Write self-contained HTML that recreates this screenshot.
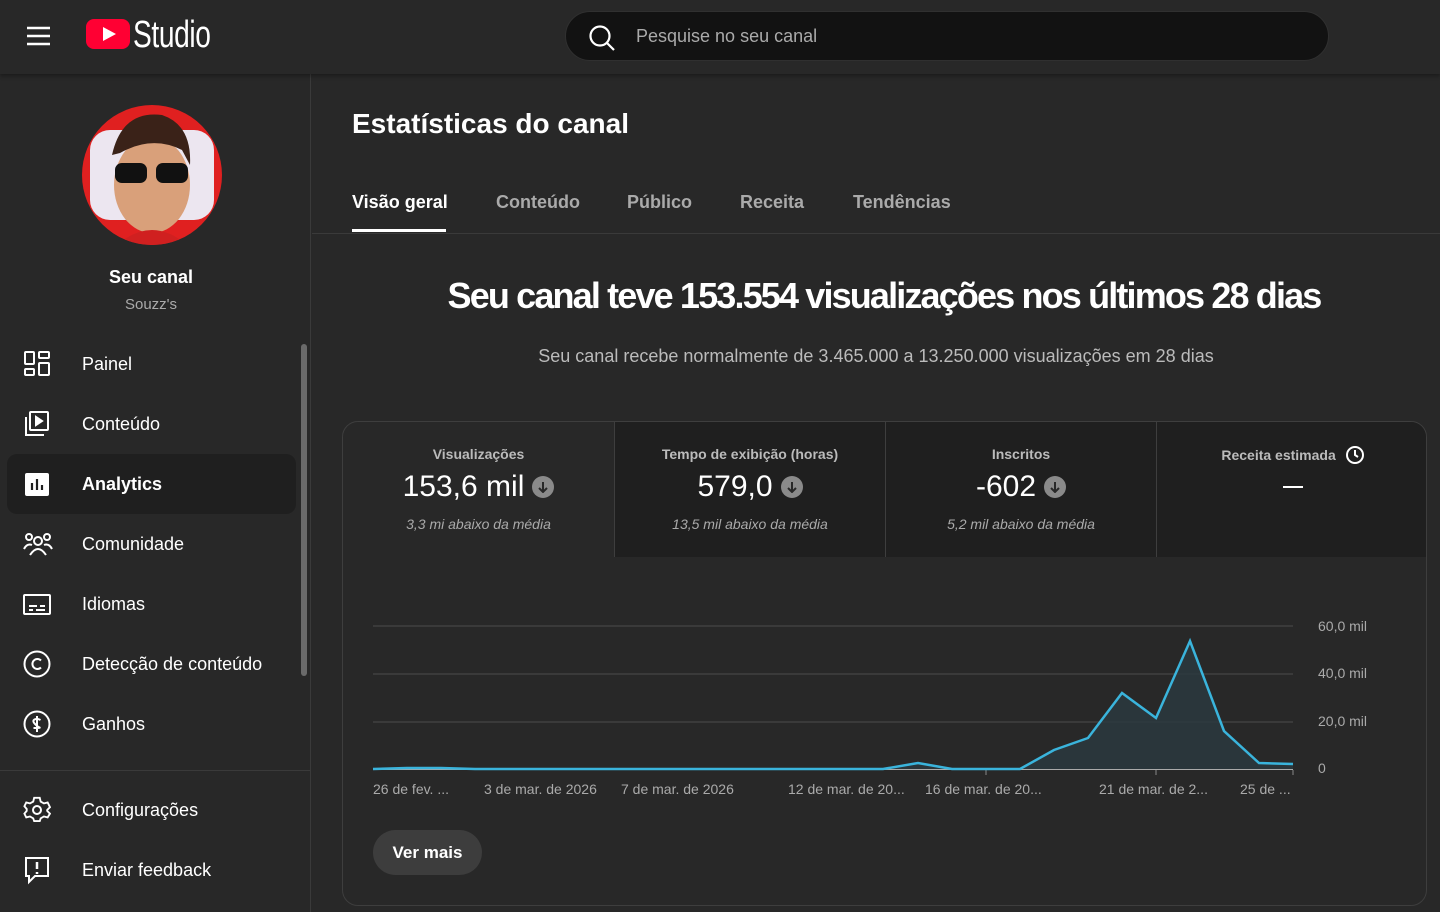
<!DOCTYPE html>
<html><head><meta charset="utf-8"><style>
*{box-sizing:border-box;margin:0;padding:0}
body{width:1440px;height:912px;background:#282828;font-family:"Liberation Sans",Arial,sans-serif;color:#fff;overflow:hidden;position:relative}
.hdr{position:absolute;left:0;top:0;width:1440px;height:74px;background:#282828;box-shadow:0 2px 4px rgba(0,0,0,.35);z-index:2}
.side{position:absolute;left:0;top:74px;width:311px;height:838px;border-right:1px solid #3a3a3a}
.nav{position:absolute;left:7px;width:289px;height:60px;border-radius:10px;display:flex;align-items:center;font-size:18px}
.nav svg{position:absolute;left:16px}
.nav span{position:absolute;left:75px}
.tab{position:absolute;top:192px;font-size:18px;font-weight:bold;color:#aaa}
.card{position:absolute;left:342px;top:421px;width:1085px;height:485px;border:1px solid #3e3e3e;border-radius:16px;overflow:hidden}
.cell{position:absolute;top:0;height:135px;width:271px;text-align:center}
.cell .t{margin-top:24px;font-size:14px;font-weight:bold;color:#bbb}
.cell .v{margin-top:8px;font-size:30px;display:flex;justify-content:center;align-items:center;gap:8px}
.cell .s{margin-top:12px;font-size:14px;font-style:italic;color:#aaa}
.dn{width:22px;height:22px;border-radius:50%;background:#8a8a8a;display:inline-flex;align-items:center;justify-content:center}
.xl{position:absolute;top:781px;font-size:14px;color:#aaa}
.yl{position:absolute;left:1318px;font-size:14px;color:#aaa}
</style></head><body>
<div class="hdr">
<svg style="position:absolute;left:27px;top:26px" width="24" height="20"><g stroke="#fff" stroke-width="2.4"><line x1="0" y1="2" x2="23" y2="2"/><line x1="0" y1="10" x2="23" y2="10"/><line x1="0" y1="18" x2="23" y2="18"/></g></svg>
<svg style="position:absolute;left:86px;top:19px" width="44" height="30"><rect width="44" height="30" rx="8" fill="#ff0033"/><path d="M17 8 L30 15 L17 22Z" fill="#fff"/></svg>
<div style="position:absolute;left:133px;top:14px;font-size:38px;letter-spacing:-0.5px;transform:scaleX(.74);transform-origin:left;line-height:42px">Studio</div>
<div style="position:absolute;left:565px;top:11px;width:764px;height:50px;border-radius:25px;background:#121212;border:1px solid #303030">
<svg style="position:absolute;left:22px;top:12px" width="28" height="28" fill="none" stroke="#fff" stroke-width="2.2"><circle cx="12" cy="12" r="9.5"/><line x1="19" y1="19" x2="26" y2="26"/></svg>
<div style="position:absolute;left:70px;top:14px;font-size:18px;color:#aaa">Pesquise no seu canal</div></div>
</div>
<div class="side">
<svg style="position:absolute;left:82px;top:31px" width="140" height="140"><defs><clipPath id="c"><circle cx="70" cy="70" r="70"/></clipPath></defs><g clip-path="url(#c)"><rect width="140" height="140" fill="#e02020"/><rect x="8" y="25" width="124" height="90" rx="20" fill="#ece6f0"/><ellipse cx="70" cy="80" rx="38" ry="48" fill="#d9a07a"/><path d="M30 50 Q40 5 80 10 Q110 20 108 60 L100 45 Q70 30 38 48Z" fill="#3a2218"/><rect x="33" y="58" width="32" height="20" rx="7" fill="#111"/><rect x="74" y="58" width="32" height="20" rx="7" fill="#111"/><path d="M35 140 Q70 110 105 140Z" fill="#d02020"/></g></svg>
<div style="position:absolute;left:0;width:302px;top:193px;text-align:center;font-size:18px;font-weight:bold">Seu canal</div>
<div style="position:absolute;left:0;width:302px;top:222px;text-align:center;font-size:15px;color:#aaa">Souzz's</div>
<div style="position:absolute;left:301px;top:270px;width:6px;height:332px;border-radius:3px;background:#6a6a6a"></div>
<div style="position:absolute;left:0;top:696px;width:311px;border-top:1px solid #3a3a3a"></div>
<div class="nav" style="top:260px"><svg width="28" height="28" fill="none" stroke="#fff" stroke-width="2"><rect x="2" y="2" width="9" height="12" rx="1"/><rect x="16" y="2" width="10" height="6" rx="1"/><rect x="2" y="19" width="9" height="6" rx="1"/><rect x="16" y="13" width="10" height="12" rx="1"/></svg><span>Painel</span></div>
<div class="nav" style="top:320px"><svg width="28" height="28" fill="none" stroke="#fff" stroke-width="2"><rect x="7" y="2" width="18" height="18" rx="1"/><path d="M3 7V25H21"/><path d="M13 7L19 11L13 15Z" fill="#fff"/></svg><span>Conteúdo</span></div>
<div class="nav" style="top:380px;background:#1f1f1f;font-weight:bold"><svg width="28" height="28"><rect x="2" y="3" width="24" height="23" rx="2" fill="#fff"/><g stroke="#1f1f1f" stroke-width="2.2"><line x1="9" y1="13" x2="9" y2="20"/><line x1="14" y1="9" x2="14" y2="20"/><line x1="19" y1="15" x2="19" y2="20"/></g></svg><span>Analytics</span></div>
<div class="nav" style="top:440px"><svg width="30" height="28" fill="none" stroke="#fff" stroke-width="2"><circle cx="15" cy="11" r="4"/><path d="M7 25Q15 13 23 25"/><circle cx="6" cy="7" r="3"/><circle cx="24" cy="7" r="3"/><path d="M1 19Q4 13 9 15M29 19Q26 13 21 15"/></svg><span>Comunidade</span></div>
<div class="nav" style="top:500px"><svg width="28" height="28" fill="none" stroke="#fff" stroke-width="2"><rect x="1" y="5" width="26" height="19" rx="1"/><path d="M6 16H14M17 16H22M6 20H10M13 20H22"/></svg><span>Idiomas</span></div>
<div class="nav" style="top:560px"><svg width="28" height="28" fill="none" stroke="#fff" stroke-width="2"><circle cx="14" cy="14" r="12.5"/><path d="M18 10.5A5 5 0 1 0 18 17.5"/></svg><span>Detecção de conteúdo</span></div>
<div class="nav" style="top:620px"><svg width="28" height="28" fill="none" stroke="#fff" stroke-width="2"><circle cx="14" cy="14" r="12.5"/><path d="M17.5 10Q14 8 11.5 9.5T12 14T16.5 17.5T10.5 18M14 6V22"/></svg><span>Ganhos</span></div>
<div class="nav" style="top:706px"><svg width="28" height="28" fill="none" stroke="#fff" stroke-width="2"><path d="M11 2H17L18 6L21.5 8L25.5 7L28 12L25 15L25 16L28 19L25.5 23L21.5 22L18 24L17 27H11L10 24L6.5 22L2.5 23L0.5 19L3 16V14L0.5 11L2.5 7L6.5 8L10 6Z" transform="scale(.93) translate(1,0)"/><circle cx="14" cy="14" r="4"/></svg><span>Configurações</span></div>
<div class="nav" style="top:766px"><svg width="28" height="30" fill="none" stroke="#fff" stroke-width="2"><path d="M3 3H25V21H12L6 27V21H3Z"/><path d="M14 7V14M14 17V19" stroke-width="2.5"/></svg><span>Enviar feedback</span></div>
</div>
<div style="position:absolute;left:352px;top:108px;font-size:28px;font-weight:bold">Estatísticas do canal</div>
<div class="tab" style="left:352px;color:#fff">Visão geral</div>
<div style="position:absolute;left:352px;top:229px;width:94px;height:3px;background:#fff"></div>
<div class="tab" style="left:496px">Conteúdo</div>
<div class="tab" style="left:627px">Público</div>
<div class="tab" style="left:740px">Receita</div>
<div class="tab" style="left:853px">Tendências</div>
<div style="position:absolute;left:312px;top:233px;width:1128px;border-top:1px solid #3a3a3a"></div>
<div style="position:absolute;left:312px;width:1128px;top:275px;text-align:center;font-size:36px;font-weight:bold;letter-spacing:-1.85px;padding-left:16px">Seu canal teve 153.554 visualizações nos últimos 28 dias</div>
<div style="position:absolute;left:312px;width:1128px;top:346px;text-align:center;font-size:18px;color:#bbb">Seu canal recebe normalmente de 3.465.000 a 13.250.000 visualizações em 28 dias</div>
<div class="card">
<div class="cell" style="left:0"><div class="t">Visualizações</div><div class="v">153,6 mil <span class="dn"><svg width="12" height="12" stroke="#282828" stroke-width="2" fill="none"><path d="M6 1V11M2 7L6 11L10 7"/></svg></span></div><div class="s">3,3 mi abaixo da média</div></div>
<div class="cell" style="left:271px;background:#1f1f1f;border-left:1px solid #3e3e3e"><div class="t">Tempo de exibição (horas)</div><div class="v">579,0 <span class="dn"><svg width="12" height="12" stroke="#282828" stroke-width="2" fill="none"><path d="M6 1V11M2 7L6 11L10 7"/></svg></span></div><div class="s">13,5 mil abaixo da média</div></div>
<div class="cell" style="left:542px;background:#1f1f1f;border-left:1px solid #3e3e3e"><div class="t">Inscritos</div><div class="v">-602 <span class="dn"><svg width="12" height="12" stroke="#282828" stroke-width="2" fill="none"><path d="M6 1V11M2 7L6 11L10 7"/></svg></span></div><div class="s">5,2 mil abaixo da média</div></div>
<div class="cell" style="left:813px;width:272px;background:#1f1f1f;border-left:1px solid #3e3e3e"><div class="t">Receita estimada <svg style="vertical-align:-4px;margin-left:6px" width="18" height="18" fill="none" stroke="#fff" stroke-width="2"><circle cx="9" cy="9" r="8"/><path d="M9 4V9L12 11"/></svg></div><div style="margin:22px auto 0;width:20px;height:2px;background:#fff"></div></div>
</div>
<svg style="position:absolute;left:0;top:0" width="1440" height="912">
<g stroke="#3a3a3a" stroke-width="2"><line x1="373" y1="626" x2="1293" y2="626"/><line x1="373" y1="674" x2="1293" y2="674"/><line x1="373" y1="722" x2="1293" y2="722"/></g>
<line x1="373" y1="769.5" x2="1293" y2="769.5" stroke="#aaa" stroke-width="1"/>
<g stroke="#888"><line x1="986" y1="770" x2="986" y2="775"/><line x1="1156" y1="770" x2="1156" y2="775"/><line x1="1293" y1="770" x2="1293" y2="775"/></g>
<path d="M373 769L407 768L441 768L475 769L883 769L918 763L952 769L1020 769L1054 750L1088 738L1122 693L1156 718L1190 641L1224 731L1259 763L1293 764L1293 769Z" fill="#2a3a40" fill-opacity=".8"/>
<path d="M373 769L407 768L441 768L475 769L883 769L918 763L952 769L1020 769L1054 750L1088 738L1122 693L1156 718L1190 641L1224 731L1259 763L1293 764" fill="none" stroke="#3ab4dc" stroke-width="2.5"/>
</svg>
<div class="yl" style="top:618px">60,0 mil</div><div class="yl" style="top:665px">40,0 mil</div><div class="yl" style="top:713px">20,0 mil</div><div class="yl" style="top:760px">0</div>
<div class="xl" style="left:373px">26 de fev. ...</div><div class="xl" style="left:484px">3 de mar. de 2026</div><div class="xl" style="left:621px">7 de mar. de 2026</div><div class="xl" style="left:788px">12 de mar. de 20...</div><div class="xl" style="left:925px">16 de mar. de 20...</div><div class="xl" style="left:1099px">21 de mar. de 2...</div><div class="xl" style="left:1240px">25 de ...</div>
<div style="position:absolute;left:373px;top:830px;width:109px;height:45px;border-radius:23px;background:#3d3d3d;font-size:17px;font-weight:bold;text-align:center;line-height:45px">Ver mais</div>
</body></html>
